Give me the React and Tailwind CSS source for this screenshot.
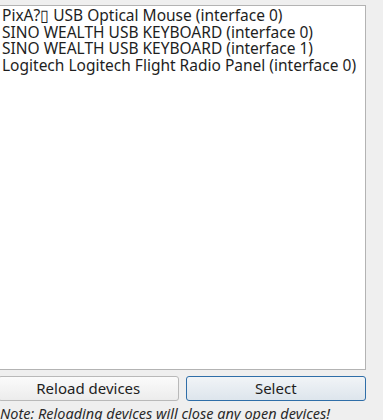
import React from 'react';

const devices = [
  'PixA?\u25AF USB Optical Mouse (interface 0)',
  'SINO WEALTH USB KEYBOARD (interface 0)',
  'SINO WEALTH USB KEYBOARD (interface 1)',
  'Logitech Logitech Flight Radio Panel (interface 0)',
];

const App = () => {
  return (
    <div
      className="w-[383px] h-[420px] bg-[#efefef] overflow-hidden text-[#1e1e1e]"
      style={{ fontFamily: '"Noto Sans", "Open Sans", sans-serif' }}
    >
      <div className="ml-[-2px] mt-[5px] w-[368px] h-[365px] bg-white border border-[#b3b3b3] pl-[3px] pt-[1px]">
        {devices.map((d) => (
          <div key={d} className="text-[15.5px] leading-[16.5px] whitespace-nowrap">
            {d}
          </div>
        ))}
      </div>
      <div className="flex ml-[-2px] mt-[6px] gap-[7px] w-[368px]">
        <button className="flex-1 h-[25px] rounded-[3px] border border-[#b9b9b9] bg-gradient-to-b from-[#fbfbfb] to-[#ececec] text-[15px] leading-none">
          Reload devices
        </button>
        <button className="flex-1 h-[25px] rounded-[3px] border border-[#2f6ea8] bg-gradient-to-b from-[#f1f4f7] to-[#dde5ec] text-[15px] leading-none">
          Select
        </button>
      </div>
      <div className="mt-[4px] italic text-[14.5px] leading-[16px] text-[#2a2a2a] whitespace-nowrap">
        Note: Reloading devices will close any open devices!
      </div>
    </div>
  );
};

export default App;
